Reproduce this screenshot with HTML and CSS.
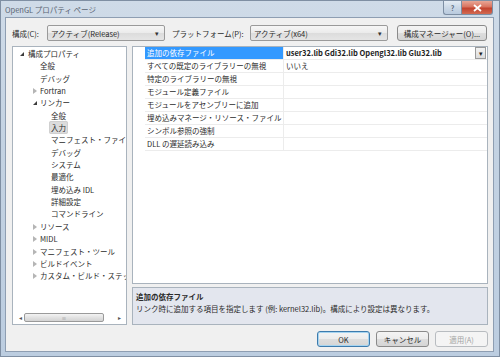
FILE: index.html
```html
<!DOCTYPE html>
<html lang="ja">
<head>
  <meta charset="UTF-8">
  <title>OpenGL プロパティ ページ</title>
  <link rel="stylesheet" href="styles.css">
</head>
<body>
  <div class="window">
    <div class="titlebar">
      <span class="title">OpenGL プロパティ ページ</span>
      <div class="caption-btns">
        <span class="cap-btn help">?</span>
        <span class="cap-btn close">
          <svg width="9" height="8" viewBox="0 0 9 8"><path d="M1 1 L8 7 M8 1 L1 7" stroke="#fff" stroke-width="1.8"/></svg>
        </span>
      </div>
    </div>

    <div class="client">
      <!-- configuration row -->
      <div class="toolbar">
        <span class="label">構成(C):</span>
        <div class="combo combo-config">アクティブ(Release)<span class="arrow">▾</span></div>
        <span class="label label-platform">プラットフォーム(P):</span>
        <div class="combo combo-platform">アクティブ(x64)<span class="arrow">▾</span></div>
        <button class="btn btn-manager">構成マネージャー(O)...</button>
      </div>

      <div class="main">
        <!-- property tree -->
        <div class="tree">
          <ul class="tree-list">
            <li class="lv0"><span class="exp open"></span>構成プロパティ</li>
            <li class="lv1">全般</li>
            <li class="lv1">デバッグ</li>
            <li class="lv1"><span class="exp closed"></span>Fortran</li>
            <li class="lv1"><span class="exp open"></span>リンカー</li>
            <li class="lv2">全般</li>
            <li class="lv2"><span class="sel">入力</span></li>
            <li class="lv2">マニフェスト・ファイル</li>
            <li class="lv2">デバッグ</li>
            <li class="lv2">システム</li>
            <li class="lv2">最適化</li>
            <li class="lv2">埋め込み IDL</li>
            <li class="lv2">詳細設定</li>
            <li class="lv2">コマンドライン</li>
            <li class="lv1"><span class="exp closed"></span>リソース</li>
            <li class="lv1"><span class="exp closed"></span>MIDL</li>
            <li class="lv1"><span class="exp closed"></span>マニフェスト・ツール</li>
            <li class="lv1"><span class="exp closed"></span>ビルドイベント</li>
            <li class="lv1"><span class="exp closed"></span>カスタム・ビルド・ステップ</li>
          </ul>
          <div class="hscroll">
            <span class="sarrow">◂</span>
            <div class="track"><div class="thumb"><span class="grip">≡</span></div></div>
            <span class="sarrow">▸</span>
          </div>
        </div>

        <div class="right">
          <!-- property grid -->
          <div class="grid">
            <div class="row selected">
              <div class="gutter"></div>
              <div class="name">追加の依存ファイル</div>
              <div class="value bold">user32.lib Gdi32.lib Opengl32.lib Glu32.lib<span class="drop">▾</span></div>
            </div>
            <div class="row">
              <div class="gutter"></div>
              <div class="name">すべての既定のライブラリーの無視</div>
              <div class="value">いいえ</div>
            </div>
            <div class="row">
              <div class="gutter"></div>
              <div class="name">特定のライブラリーの無視</div>
              <div class="value"></div>
            </div>
            <div class="row">
              <div class="gutter"></div>
              <div class="name">モジュール定義ファイル</div>
              <div class="value"></div>
            </div>
            <div class="row">
              <div class="gutter"></div>
              <div class="name">モジュールをアセンブリーに追加</div>
              <div class="value"></div>
            </div>
            <div class="row">
              <div class="gutter"></div>
              <div class="name">埋め込みマネージ・リソース・ファイル</div>
              <div class="value"></div>
            </div>
            <div class="row">
              <div class="gutter"></div>
              <div class="name">シンボル参照の強制</div>
              <div class="value"></div>
            </div>
            <div class="row">
              <div class="gutter"></div>
              <div class="name">DLL の遅延読み込み</div>
              <div class="value"></div>
            </div>
          </div>

          <!-- description -->
          <div class="desc">
            <div class="desc-title">追加の依存ファイル</div>
            <div class="desc-text">リンク時に追加する項目を指定します (例: kernel32.lib)。構成により設定は異なります。</div>
          </div>
        </div>
      </div>

      <div class="buttons">
        <button class="btn btn-dlg default">OK</button>
        <button class="btn btn-dlg">キャンセル</button>
        <button class="btn btn-dlg disabled">適用(A)</button>
      </div>
    </div>
  </div>
</body>
</html>
```

FILE: styles.css
```css
/* Reset default styles */
* {
  margin: 0;
  padding: 0;
  box-sizing: border-box;
}

body {
  font-family: 'Noto Sans CJK JP', 'Noto Sans', sans-serif;
  font-size: 7.5px;
  color: #2b2b2b;
  background: #fff;
}

.window {
  width: 500px;
  height: 357px;
  display: flex;
  flex-direction: column;
  background: linear-gradient(180deg, #cfdbe8 0%, #c3d2e2 40%, #bccde0 100%);
  border: 1px solid #7f8fa3;
}

/* title bar */
.titlebar {
  height: 16px;
  display: flex;
  align-items: flex-start;
  justify-content: space-between;
  padding-left: 4px;
}

.title {
  margin-top: 3px;
  color: #5a6472;
  font-size: 7.5px;
}

.caption-btns {
  display: flex;
  margin-right: 6px;
}

.cap-btn {
  height: 14px;
  display: flex;
  align-items: center;
  justify-content: center;
  border: 1px solid #7d8ea3;
  border-top: none;
}

.help {
  width: 18px;
  color: #56657a;
  font-size: 7px;
  font-weight: bold;
  background: linear-gradient(180deg, #e4ecf4 0%, #cbd8e6 50%, #b9cade 100%);
  border-radius: 0 0 0 3px;
  border-right: none;
}

.close {
  width: 32px;
  background: linear-gradient(180deg, #e8a696 0%, #d9735f 45%, #c3432f 55%, #d26a52 100%);
  border-radius: 0 0 3px 0;
}

/* client area */
.client {
  flex: 1;
  margin: 0 5px 4px 4px;
  background: #f0f0f0;
  border: 1px solid #8e9eb2;
  padding: 7px 5px 0 6px;
  display: flex;
  flex-direction: column;
}

.toolbar {
  display: flex;
  align-items: center;
  height: 16px;
}

.label {
  width: 35px;
}

.label-platform {
  width: 78px;
  margin-left: 7px;
}

.combo {
  height: 16px;
  border: 1px solid #9a9a9a;
  border-radius: 2px;
  background: linear-gradient(180deg, #f6f6f6 0%, #ebebeb 50%, #dcdcdc 51%, #e5e5e5 100%);
  display: flex;
  align-items: center;
  justify-content: space-between;
  padding: 0 5px 0 3px;
}

.combo-config {
  width: 118px;
}

.combo-platform {
  width: 138px;
}

.arrow {
  font-size: 7px;
  color: #333;
}

.btn {
  font-family: inherit;
  font-size: 7.5px;
  color: #2b2b2b;
  height: 16px;
  border: 1px solid #8a8a8a;
  border-radius: 3px;
  background: linear-gradient(180deg, #f4f4f4 0%, #ececec 48%, #dddddd 52%, #d5d5d5 100%);
}

.btn-manager {
  width: 90px;
  margin-left: 9px;
}

/* tree + grid */
.main {
  display: flex;
  margin-top: 5px;
  height: 279px;
}

.tree {
  width: 115px;
  background: #fff;
  border: 1px solid #a9b3bd;
  display: flex;
  flex-direction: column;
  justify-content: space-between;
  padding-bottom: 2px;
}

.tree-list {
  list-style-type: none;
  padding-top: 1px;
  overflow: hidden;
}

.tree-list li {
  height: 12.35px;
  line-height: 12.35px;
  white-space: nowrap;
  position: relative;
}

.lv0 { padding-left: 15px; }
.lv1 { padding-left: 27px; }
.lv2 { padding-left: 38px; }

.exp {
  position: absolute;
  top: 4px;
  width: 0;
  height: 0;
}

.lv0 .exp { left: 7px; }
.lv1 .exp { left: 20px; }

.exp.open {
  border-left: 4px solid transparent;
  border-bottom: 4px solid #3c3c3c;
}

.exp.closed {
  top: 3px;
  border-top: 3px solid transparent;
  border-bottom: 3px solid transparent;
  border-left: 4px solid #b5b5b5;
}

.sel {
  background: #dcdcdc;
  border: 1px solid #d0d0d0;
  border-radius: 2px;
  padding: 0 1px;
  margin-left: -2px;
}

.hscroll {
  display: flex;
  align-items: center;
  height: 10px;
  margin: 0 3px;
  color: #555;
  font-size: 6px;
}

.sarrow {
  width: 8px;
  text-align: center;
}

.track {
  flex: 1;
  height: 9px;
  padding: 0 10px 0 0;
}

.thumb {
  width: 80px;
  height: 9px;
  border: 1px solid #9a9a9a;
  border-radius: 2px;
  background: linear-gradient(180deg, #f3f3f3 0%, #e2e2e2 50%, #d3d3d3 100%);
  display: flex;
  align-items: center;
  justify-content: center;
}

.grip {
  font-size: 5px;
  color: #888;
}

.right {
  flex: 1;
  margin-left: 5px;
  display: flex;
  flex-direction: column;
  gap: 3px;
}

.grid {
  flex: 1;
  background: #fff;
  border: 1px solid #a9b3bd;
}

.row {
  display: flex;
  height: 13px;
  line-height: 12px;
  white-space: nowrap;
}

.gutter {
  width: 12px;
}

.name {
  width: 139px;
  padding-left: 2px;
  border-bottom: 1px solid #ececec;
  border-right: 1px solid #ececec;
  overflow: hidden;
}

.value {
  flex: 1;
  padding-left: 2px;
  border-bottom: 1px solid #ececec;
  display: flex;
  justify-content: space-between;
}

.selected .name {
  background: #3399ff;
  color: #fff;
}

.bold {
  font-weight: bold;
  color: #1e1e1e;
}

.drop {
  width: 11px;
  height: 12px;
  margin-right: 1px;
  border: 1px solid #9a9a9a;
  background: linear-gradient(180deg, #f3f3f3 0%, #dcdcdc 100%);
  font-size: 7px;
  font-weight: normal;
  text-align: center;
  line-height: 10px;
}

.desc {
  height: 38px;
  background: #e3e6ee;
  border: 1px solid #a9b3bd;
  padding: 3px 3px;
}

.desc-title {
  font-weight: bold;
  line-height: 12px;
}

.desc-text {
  line-height: 12px;
}

/* dialog buttons */
.buttons {
  display: flex;
  justify-content: flex-end;
  gap: 6px;
  margin-top: 6px;
}

.btn-dlg {
  width: 53px;
}

.btn-dlg.default {
  border-color: #3d7bad;
  box-shadow: inset 0 0 0 1px #a6d4f0;
}

.btn-dlg.disabled {
  color: #a3a3a3;
  border-color: #b8bcc0;
  background: #f4f4f4;
}
```
